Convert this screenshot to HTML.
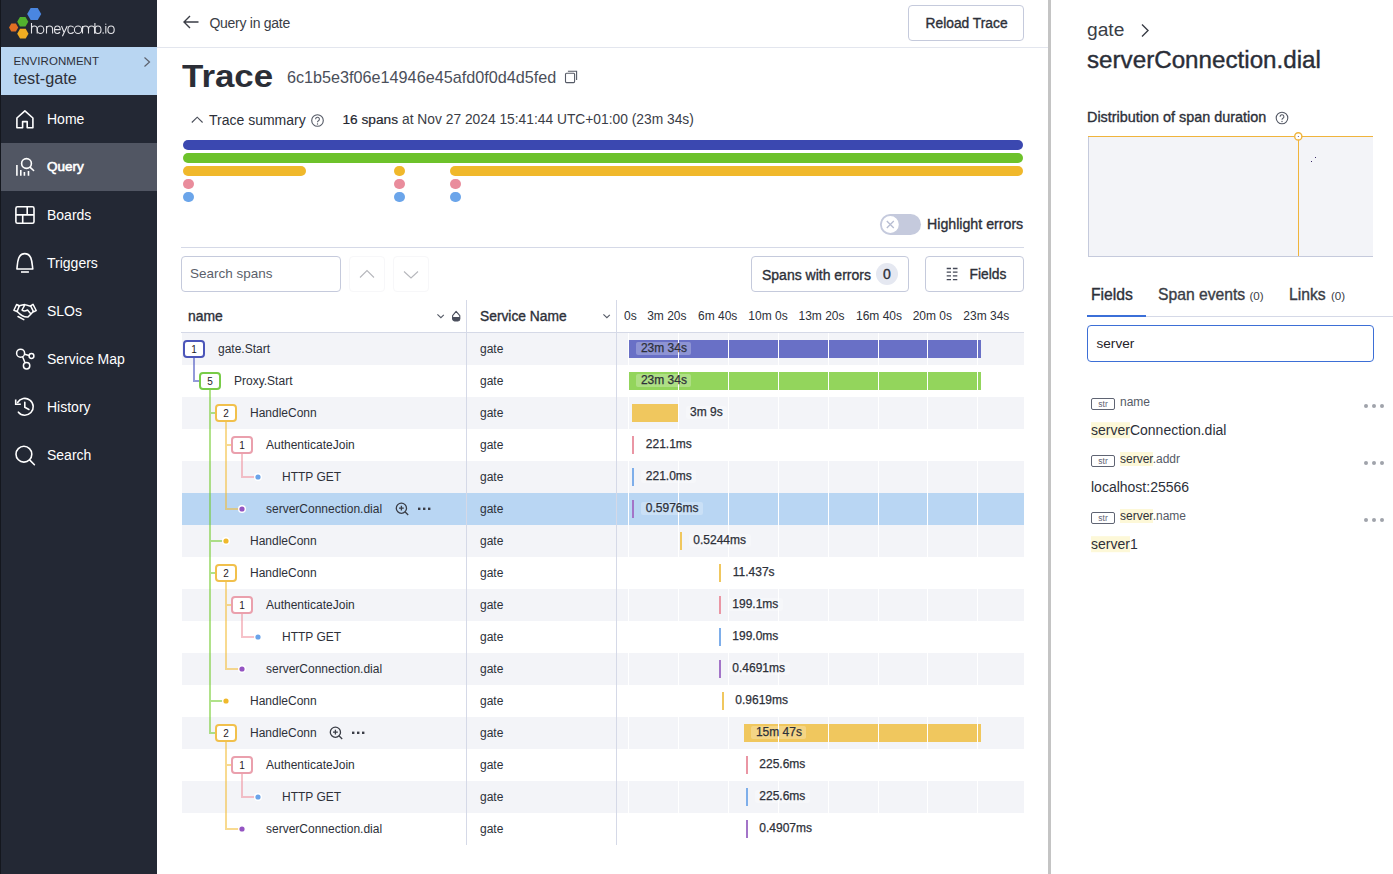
<!DOCTYPE html>
<html><head><meta charset="utf-8">
<style>
*{box-sizing:border-box;margin:0;padding:0}
html,body{width:1393px;height:874px;overflow:hidden;background:#fff;font-family:"Liberation Sans", sans-serif;color:#2d3039}
.ab{position:absolute}
.m{-webkit-text-stroke:0.35px currentColor}
.lb{position:absolute;white-space:nowrap;height:13px;line-height:13px;padding:0 4.5px;border-radius:2px;background:rgba(255,255,255,0.25);font-size:12px;color:#2d3039;-webkit-text-stroke:0.25px #2d3039}
.t{position:absolute;white-space:nowrap;line-height:1}
svg{position:absolute;overflow:visible}
</style></head><body>

<div class="ab" style="left:0;top:0;width:157px;height:874px;background:#232834"></div>
<div class="ab" style="left:0;top:0;width:1px;height:874px;background:#14171e"></div>
<svg style="left:0;top:0" width="157" height="47"><polygon points="41.25,14.00 37.73,20.11 30.68,20.11 27.15,14.00 30.68,7.89 37.73,7.89" fill="#4a86e0"/><polygon points="28.30,21.80 25.52,26.61 19.98,26.61 17.20,21.80 19.97,16.99 25.52,16.99" fill="#52b22e"/><polygon points="18.20,27.45 15.90,31.43 11.30,31.43 9.00,27.45 11.30,23.47 15.90,23.47" fill="#e06f23"/><polygon points="28.50,33.65 25.68,38.54 20.03,38.54 17.20,33.65 20.02,28.76 25.68,28.76" fill="#f0ad22"/></svg>
<svg style="left:0;top:0" width="157" height="47"><g fill="none" stroke="#e4e4e8" stroke-width="1.1"><path d="M31.5 23 V33.5 M31.5 29 Q31.5 26 34.35 26 Q37.2 26 37.2 29 V33.5"/><ellipse cx="40.5" cy="29.75" rx="3.3" ry="3.75"/><path d="M46.5 26 V33.5 M46.5 29 Q46.5 26 49.55 26 Q52.6 26 52.6 29 V33.5"/><path d="M54.5 29.6 H60.2 C60.2 27.4 58.9 26 57.35 26 C55.8 26 54.5 27.6 54.5 29.75 C54.5 31.9 55.8 33.5 57.35 33.5 C58.4 33.5 59.3 33 59.9 32.1"/><path d="M61.5 26 L64.3 33 M67.2 26 L62.4 36.3"/><path d="M73.6 27.4 C73 26.5 72 26 70.8 26 C69.2 26 67.9 27.6 67.9 29.75 C67.9 31.9 69.2 33.5 70.8 33.5 C72 33.5 73 33 73.6 32.1"/><ellipse cx="78.05" cy="29.75" rx="3.65" ry="3.75"/><path d="M82.5 26 V33.5 M82.5 29 Q82.5 26 85.5 26 Q88.5 26 88.5 29 V33.5 M88.5 29 Q88.5 26 91.5 26 Q94.6 26 94.6 29 V33.5"/><path d="M94.9 23 V33.5"/><ellipse cx="97.95" cy="29.75" rx="3.05" ry="3.75"/><path d="M105.8 26 V33.5"/><ellipse cx="111.05" cy="29.75" rx="3.15" ry="3.75"/></g><circle cx="103.1" cy="33" r="0.75" fill="#e4e4e8"/><circle cx="105.8" cy="24.2" r="0.6" fill="#e4e4e8"/></svg>
<div class="ab" style="left:1px;top:47px;width:156px;height:48px;background:#b9d6f2"></div>
<div class="t" style="left:13.5px;top:55.5px;font-size:11.5px;letter-spacing:0.05px;color:#2d3039">ENVIRONMENT</div>
<div class="t" style="left:13.5px;top:70px;font-size:16.3px;color:#2d3039">test-gate</div>
<svg style="left:142px;top:56px" width="10" height="12"><path d="M2.5 1.5 L7.5 6 L2.5 10.5" fill="none" stroke="#5d626e" stroke-width="1.2"/></svg>
<svg style="left:10px;top:105px" width="30" height="30"><path d="M6.9 22.8 V13 L14.9 5.8 L22.9 13 V22.8 H17.2 V16.6 H12.6 V22.8 Z" fill="none" stroke="#fff" stroke-width="1.6" stroke-linejoin="round"/></svg>
<div class="t" style="left:47px;top:112px;font-size:14px;color:#fff;">Home</div>
<div class="ab" style="left:1px;top:143px;width:156px;height:48px;background:#515663"></div>
<svg style="left:10px;top:153px" width="30" height="30"><g stroke="#fff" stroke-width="1.6" fill="none"><path d="M6.9 12 V22.8 M10.8 17 V22.8 M14.4 18.9 V22.8 M18.5 17.9 V22.8"/><circle cx="16.5" cy="10.5" r="4.9"/><path d="M20.2 14.3 L23.6 17.5" stroke-linecap="round"/></g></svg>
<div class="t" style="left:47px;top:160px;font-size:13.5px;color:#fff;-webkit-text-stroke:0.6px #fff">Query</div>
<svg style="left:10px;top:201px" width="30" height="30"><g stroke="#fff" stroke-width="1.6" fill="none"><rect x="5.9" y="5.8" width="18.1" height="16.5" rx="1.6"/><path d="M5.9 13.9 H24 M17.2 5.8 V13.9 M12.7 13.9 V22.3"/></g></svg>
<div class="t" style="left:47px;top:208px;font-size:14px;color:#fff;">Boards</div>
<svg style="left:10px;top:249px" width="30" height="30"><g stroke="#fff" stroke-width="1.6" fill="none" stroke-linejoin="round"><path d="M6.9 20 C7.6 15 7.2 4.6 14.8 4.6 C22.4 4.6 22 15 22.8 20 Z"/><path d="M11 23 H18.9"/></g></svg>
<div class="t" style="left:47px;top:256px;font-size:14px;color:#fff;">Triggers</div>
<svg style="left:10px;top:297px" width="30" height="30"><g stroke="#fff" stroke-width="1.5" fill="none" stroke-linejoin="round" stroke-linecap="round"><path d="M3.9 13.3 L6.6 7.5 L9.4 8.8 L7 14.6 Z"/><path d="M23 7.4 L26.2 13.5 L23.6 14.8 L20.6 8.9 Z"/><path d="M8.6 9 C11 8.3 13 7.8 15 7.6 L20.6 9.2 M15 7.6 L12 13 C13 14 15 14.5 17.5 13 L21 17 L18 20 C14 20.5 11 18.5 7.2 14.4 M23.2 14.6 L21 17"/><path d="M8 19.5 L13.8 22.6"/></g></svg>
<div class="t" style="left:47px;top:304px;font-size:14px;color:#fff;">SLOs</div>
<svg style="left:10px;top:345px" width="30" height="30"><g stroke="#fff" stroke-width="1.5" fill="none"><circle cx="10.6" cy="8.2" r="4"/><circle cx="21.5" cy="11" r="2.4"/><circle cx="16.6" cy="20.8" r="3.2"/><path d="M14.6 9.3 L19.1 10.4 M12.6 11.8 L15 17.7"/></g></svg>
<div class="t" style="left:47px;top:352px;font-size:14px;color:#fff;">Service Map</div>
<svg style="left:10px;top:393px" width="30" height="30"><g stroke="#fff" stroke-width="1.6" fill="none" stroke-linecap="round"><path d="M7.6 9.5 A8.4 8.4 0 1 1 8.4 19.2"/><path d="M5.7 7.2 V11.3 H10" stroke-linecap="square"/><path d="M14.8 9.3 V14.3 L18.9 16.5"/></g></svg>
<div class="t" style="left:47px;top:400px;font-size:14px;color:#fff;">History</div>
<svg style="left:10px;top:441px" width="30" height="30"><g stroke="#fff" stroke-width="1.6" fill="none"><circle cx="13.9" cy="13.2" r="7.9"/><path d="M19.6 18.9 L24.4 23.7" stroke-linecap="round"/></g></svg>
<div class="t" style="left:47px;top:448px;font-size:14px;color:#fff;">Search</div>
<svg style="left:182px;top:14px" width="18" height="16"><path d="M16.5 8 H2 M8 2 L2 8 L8 14" fill="none" stroke="#3a3d46" stroke-width="1.4"/></svg>
<div class="t" style="left:209.5px;top:16px;font-size:14px;letter-spacing:-0.28px;color:#3a3d46">Query in gate</div>
<div class="ab" style="left:908px;top:5px;width:116px;height:36px;border:1px solid #c5cadc;border-radius:4px"></div>
<div class="t m" style="left:925.5px;top:16.5px;font-size:13.8px;color:#2d3039">Reload Trace</div>
<div class="ab" style="left:157px;top:47px;width:891px;height:1px;background:#e3e6ee"></div>
<div class="t" style="left:182px;top:61px;font-size:31px;font-weight:700;color:#2b2e36;transform:scaleX(1.125);transform-origin:0 0">Trace</div>
<div class="t" style="left:287px;top:69px;font-size:16.2px;color:#4b4f5a">6c1b5e3f06e14946e45afd0f0d4d5fed</div>
<svg style="left:564px;top:70px" width="14" height="14"><rect x="1.5" y="3.3" width="9.1" height="9.3" rx="1" fill="none" stroke="#555a66" stroke-width="1.1"/><path d="M3.9 1.3 H12.6 V9.9" fill="none" stroke="#555a66" stroke-width="1.1"/></svg>
<svg style="left:190px;top:115px" width="14" height="10"><path d="M1.8 7.5 L7.2 2.2 L12.6 7.5" fill="none" stroke="#4b4f5a" stroke-width="1.15"/></svg>
<div class="t" style="left:209px;top:113px;font-size:14px;color:#2d3039">Trace summary</div>
<svg style="left:311px;top:114px" width="14" height="14"><circle cx="6.5" cy="6.5" r="5.8" fill="none" stroke="#555a66" stroke-width="1.1"/><path d="M4.6 5.2 A1.9 1.9 0 1 1 7.2 6.9 Q6.5 7.3 6.5 8.2" fill="none" stroke="#555a66" stroke-width="1.1"/><circle cx="6.5" cy="10" r="0.7" fill="#555a66"/></svg>
<div class="t" style="left:342.5px;top:113px;font-size:13.7px;color:#23262e;-webkit-text-stroke:0.2px #23262e">16 spans</div>
<div class="t" style="left:402px;top:113px;font-size:13.8px;color:#3a3d46">at Nov 27 2024 15:41:44 UTC+01:00 (23m 34s)</div>
<div class="ab" style="left:183px;top:140px;width:840px;height:10px;border-radius:5px;background:#3b48b0"></div>
<div class="ab" style="left:183px;top:153px;width:840px;height:10px;border-radius:5px;background:#6dc22a"></div>
<div class="ab" style="left:183px;top:166px;width:123px;height:10px;border-radius:5px;background:#f0b82b"></div>
<div class="ab" style="left:394px;top:166px;width:11px;height:10px;border-radius:5px;background:#f0b82b"></div>
<div class="ab" style="left:450px;top:166px;width:573px;height:10px;border-radius:5px;background:#f0b82b"></div>
<div class="ab" style="left:183px;top:179px;width:11px;height:10px;border-radius:5px;background:#e98c9c"></div>
<div class="ab" style="left:183px;top:192px;width:11px;height:10px;border-radius:5px;background:#6ba5ea"></div>
<div class="ab" style="left:394px;top:179px;width:11px;height:10px;border-radius:5px;background:#e98c9c"></div>
<div class="ab" style="left:394px;top:192px;width:11px;height:10px;border-radius:5px;background:#6ba5ea"></div>
<div class="ab" style="left:450px;top:179px;width:11px;height:10px;border-radius:5px;background:#e98c9c"></div>
<div class="ab" style="left:450px;top:192px;width:11px;height:10px;border-radius:5px;background:#6ba5ea"></div>
<div class="ab" style="left:880px;top:214px;width:41px;height:21px;border-radius:11px;background:#c5cadd"></div>
<svg style="left:880px;top:214px" width="21" height="21"><circle cx="10.3" cy="10.5" r="9.2" fill="#fff" stroke="#c5cadd" stroke-width="1.4"/><path d="M6.8 7 L13.8 14 M13.8 7 L6.8 14" stroke="#b7bdd2" stroke-width="1.3"/></svg>
<div class="t m" style="left:927px;top:217px;font-size:14.2px;color:#2d3039">Highlight errors</div>
<div class="ab" style="left:181px;top:247px;width:843px;height:1px;background:#d5d9e7"></div>
<div class="ab" style="left:181px;top:256px;width:160px;height:36px;border:1px solid #c5cadc;border-radius:4px"></div>
<div class="t" style="left:190px;top:267px;font-size:13.5px;color:#5b5f6b">Search spans</div>
<div class="ab" style="left:349px;top:256px;width:36px;height:36px;border:1px solid #f7f7f9;border-radius:4px"></div>
<div class="ab" style="left:393px;top:256px;width:36px;height:36px;border:1px solid #f7f7f9;border-radius:4px"></div>
<svg style="left:359px;top:268.5px" width="16" height="10"><path d="M1 8.5 L8 1.5 L15 8.5" fill="none" stroke="#b6b7bc" stroke-width="1.1"/></svg>
<svg style="left:403px;top:270px" width="16" height="10"><path d="M1 1.5 L8 8 L15 1.5" fill="none" stroke="#b6b7bc" stroke-width="1.1"/></svg>
<div class="ab" style="left:751px;top:256px;width:158px;height:36px;border:1px solid #c5cadc;border-radius:4px"></div>
<div class="t m" style="left:762px;top:267.5px;font-size:14px;color:#2d3039">Spans with errors</div>
<div class="ab" style="left:876px;top:263px;width:22px;height:22px;border-radius:11px;background:#e5e8f1"></div>
<div class="t m" style="left:883px;top:267px;font-size:14px;color:#2d3039">0</div>
<div class="ab" style="left:925px;top:256px;width:99px;height:36px;border:1px solid #c5cadc;border-radius:4px"></div>
<svg style="left:940px;top:262px" width="24" height="24"><g stroke="#454957" stroke-width="1.3"><path d="M6.7 6.5 H11 M12.9 6.5 H17.5 M6.7 10.2 H11 M12.9 10.2 H17.5 M6.7 13.9 H11 M12.9 13.9 H17.3 M6.7 17.6 H11 M12.9 17.6 H17.3"/></g></svg>
<div class="t m" style="left:969.5px;top:268.2px;font-size:13.8px;color:#2d3039">Fields</div>
<div class="ab" style="left:181px;top:332px;width:843px;height:1px;background:#d5d9e7"></div>
<div class="t m" style="left:188px;top:310px;font-size:13.9px;color:#2d3039">name</div>
<svg style="left:430px;top:302px" width="40" height="28"><path d="M7.4 12.3 L10.9 15.7 L13.8 12.8" fill="none" stroke="#555a66" stroke-width="1.1"/><path d="M26.1 9.3 L22.6 13.6 L22.6 17 Q23 19 24.5 19 H28 Q29.6 19 29.8 17 L29.8 13.6 Z" fill="none" stroke="#4a4e5c" stroke-width="1.1" stroke-linejoin="round"/><path d="M22.4 14.9 H30 V17 Q29.6 19 28 19 H24.5 Q23 19 22.4 17 Z" fill="#4a4e5c"/></svg>
<div class="t m" style="left:480px;top:310px;font-size:13.8px;color:#2d3039">Service Name</div>
<svg style="left:596px;top:302px" width="20" height="28"><path d="M7.4 12.3 L10.9 15.7 L13.8 12.8" fill="none" stroke="#555a66" stroke-width="1.1"/></svg>
<div class="t" style="left:624px;top:310px;font-size:12px;color:#2d3039">0s</div>
<div class="t" style="left:647.2px;top:310px;font-size:12px;color:#2d3039">3m 20s</div>
<div class="t" style="left:698px;top:310px;font-size:12px;color:#2d3039">6m 40s</div>
<div class="t" style="left:748.3px;top:310px;font-size:12px;color:#2d3039">10m 0s</div>
<div class="t" style="left:798.5px;top:310px;font-size:12px;color:#2d3039">13m 20s</div>
<div class="t" style="left:856px;top:310px;font-size:12px;color:#2d3039">16m 40s</div>
<div class="t" style="left:912.7px;top:310px;font-size:12px;color:#2d3039">20m 0s</div>
<div class="t" style="left:963.3px;top:310px;font-size:12px;color:#2d3039">23m 34s</div>
<div class="ab" style="left:182px;top:333px;width:842px;height:32px;background:#f3f4f8"></div>
<div class="ab" style="left:182px;top:397px;width:842px;height:32px;background:#f3f4f8"></div>
<div class="ab" style="left:182px;top:461px;width:842px;height:32px;background:#f3f4f8"></div>
<div class="ab" style="left:182px;top:493px;width:842px;height:32px;background:#b9d6f3"></div>
<div class="ab" style="left:182px;top:525px;width:842px;height:32px;background:#f3f4f8"></div>
<div class="ab" style="left:182px;top:589px;width:842px;height:32px;background:#f3f4f8"></div>
<div class="ab" style="left:182px;top:653px;width:842px;height:32px;background:#f3f4f8"></div>
<div class="ab" style="left:182px;top:717px;width:842px;height:32px;background:#f3f4f8"></div>
<div class="ab" style="left:182px;top:781px;width:842px;height:32px;background:#f3f4f8"></div>
<div class="ab" style="left:628.0px;top:333px;width:1px;height:512px;background:#fff"></div>
<div class="ab" style="left:677.8px;top:333px;width:1px;height:512px;background:#fff"></div>
<div class="ab" style="left:727.6px;top:333px;width:1px;height:512px;background:#fff"></div>
<div class="ab" style="left:777.5px;top:333px;width:1px;height:512px;background:#fff"></div>
<div class="ab" style="left:827.5px;top:333px;width:1px;height:512px;background:#fff"></div>
<div class="ab" style="left:877.5px;top:333px;width:1px;height:512px;background:#fff"></div>
<div class="ab" style="left:927.2px;top:333px;width:1px;height:512px;background:#fff"></div>
<div class="ab" style="left:977.1px;top:333px;width:1px;height:512px;background:#fff"></div>
<div class="ab" style="left:466px;top:300px;width:1px;height:545px;background:#d5d9e7"></div>
<div class="ab" style="left:616px;top:300px;width:1px;height:545px;background:#d5d9e7"></div>
<svg style="left:0;top:0" width="1393" height="874"><path d="M194 358 V381 M194 381 H199" stroke="#3b47bc" stroke-opacity="0.55" stroke-width="2" fill="none" stroke-linecap="square"/><path d="M210 390 V733 M210 413 H215 M210 541 H226 M210 573 H215 M210 701 H226 M210 733 H215" stroke="#70ca29" stroke-opacity="0.55" stroke-width="2" fill="none" stroke-linecap="square"/><path d="M226 422 V509 M226 445 H231 M226 509 H242" stroke="#f3bc34" stroke-opacity="0.55" stroke-width="2" fill="none" stroke-linecap="square"/><path d="M242 454 V477 M242 477 H258" stroke="#ee909d" stroke-opacity="0.55" stroke-width="2" fill="none" stroke-linecap="square"/><path d="M226 582 V669 M226 605 H231 M226 669 H242" stroke="#f3bc34" stroke-opacity="0.55" stroke-width="2" fill="none" stroke-linecap="square"/><path d="M242 614 V637 M242 637 H258" stroke="#ee909d" stroke-opacity="0.55" stroke-width="2" fill="none" stroke-linecap="square"/><path d="M226 742 V829 M226 765 H231 M226 829 H242" stroke="#f3bc34" stroke-opacity="0.55" stroke-width="2" fill="none" stroke-linecap="square"/><path d="M242 774 V797 M242 797 H258" stroke="#ee909d" stroke-opacity="0.55" stroke-width="2" fill="none" stroke-linecap="square"/><circle cx="258" cy="477" r="4" fill="#fff"/><circle cx="258" cy="477" r="2.6" fill="#6aa4ea"/><circle cx="242" cy="509" r="4" fill="#fff"/><circle cx="242" cy="509" r="2.6" fill="#9454c2"/><circle cx="226" cy="541" r="4" fill="#fff"/><circle cx="226" cy="541" r="2.6" fill="#f0b82b"/><circle cx="258" cy="637" r="4" fill="#fff"/><circle cx="258" cy="637" r="2.6" fill="#6aa4ea"/><circle cx="242" cy="669" r="4" fill="#fff"/><circle cx="242" cy="669" r="2.6" fill="#9454c2"/><circle cx="226" cy="701" r="4" fill="#fff"/><circle cx="226" cy="701" r="2.6" fill="#f0b82b"/><circle cx="258" cy="797" r="4" fill="#fff"/><circle cx="258" cy="797" r="2.6" fill="#6aa4ea"/><circle cx="242" cy="829" r="4" fill="#fff"/><circle cx="242" cy="829" r="2.6" fill="#9454c2"/></svg>
<div class="ab" style="left:183px;top:340px;width:22px;height:18px;border:2px solid #4b55b9;border-radius:4px;background:#fff"></div>
<div class="t" style="left:183px;top:344.8px;width:22px;text-align:center;font-size:10px;color:#1f2228">1</div>
<div class="t" style="left:218px;top:343px;font-size:12px;color:#2d3039">gate.Start</div>
<div class="t" style="left:480px;top:343px;font-size:12px;color:#2d3039">gate</div>
<div class="ab" style="left:199px;top:372px;width:22px;height:18px;border:2px solid #78cc48;border-radius:4px;background:#fff"></div>
<div class="t" style="left:199px;top:376.8px;width:22px;text-align:center;font-size:10px;color:#1f2228">5</div>
<div class="t" style="left:234px;top:375px;font-size:12px;color:#2d3039">Proxy.Start</div>
<div class="t" style="left:480px;top:375px;font-size:12px;color:#2d3039">gate</div>
<div class="ab" style="left:215px;top:404px;width:22px;height:18px;border:2px solid #f1c04c;border-radius:4px;background:#fff"></div>
<div class="t" style="left:215px;top:408.8px;width:22px;text-align:center;font-size:10px;color:#1f2228">2</div>
<div class="t" style="left:250px;top:407px;font-size:12px;color:#2d3039">HandleConn</div>
<div class="t" style="left:480px;top:407px;font-size:12px;color:#2d3039">gate</div>
<div class="ab" style="left:231px;top:436px;width:22px;height:18px;border:2px solid #eaa0ad;border-radius:4px;background:#fff"></div>
<div class="t" style="left:231px;top:440.8px;width:22px;text-align:center;font-size:10px;color:#1f2228">1</div>
<div class="t" style="left:266px;top:439px;font-size:12px;color:#2d3039">AuthenticateJoin</div>
<div class="t" style="left:480px;top:439px;font-size:12px;color:#2d3039">gate</div>
<div class="t" style="left:282px;top:471px;font-size:12px;color:#2d3039">HTTP GET</div>
<div class="t" style="left:480px;top:471px;font-size:12px;color:#2d3039">gate</div>
<div class="t" style="left:266px;top:503px;font-size:12px;color:#2d3039">serverConnection.dial</div>
<div class="t" style="left:480px;top:503px;font-size:12px;color:#2d3039">gate</div>
<div class="t" style="left:250px;top:535px;font-size:12px;color:#2d3039">HandleConn</div>
<div class="t" style="left:480px;top:535px;font-size:12px;color:#2d3039">gate</div>
<div class="ab" style="left:215px;top:564px;width:22px;height:18px;border:2px solid #f1c04c;border-radius:4px;background:#fff"></div>
<div class="t" style="left:215px;top:568.8px;width:22px;text-align:center;font-size:10px;color:#1f2228">2</div>
<div class="t" style="left:250px;top:567px;font-size:12px;color:#2d3039">HandleConn</div>
<div class="t" style="left:480px;top:567px;font-size:12px;color:#2d3039">gate</div>
<div class="ab" style="left:231px;top:596px;width:22px;height:18px;border:2px solid #eaa0ad;border-radius:4px;background:#fff"></div>
<div class="t" style="left:231px;top:600.8px;width:22px;text-align:center;font-size:10px;color:#1f2228">1</div>
<div class="t" style="left:266px;top:599px;font-size:12px;color:#2d3039">AuthenticateJoin</div>
<div class="t" style="left:480px;top:599px;font-size:12px;color:#2d3039">gate</div>
<div class="t" style="left:282px;top:631px;font-size:12px;color:#2d3039">HTTP GET</div>
<div class="t" style="left:480px;top:631px;font-size:12px;color:#2d3039">gate</div>
<div class="t" style="left:266px;top:663px;font-size:12px;color:#2d3039">serverConnection.dial</div>
<div class="t" style="left:480px;top:663px;font-size:12px;color:#2d3039">gate</div>
<div class="t" style="left:250px;top:695px;font-size:12px;color:#2d3039">HandleConn</div>
<div class="t" style="left:480px;top:695px;font-size:12px;color:#2d3039">gate</div>
<div class="ab" style="left:215px;top:724px;width:22px;height:18px;border:2px solid #f1c04c;border-radius:4px;background:#fff"></div>
<div class="t" style="left:215px;top:728.8px;width:22px;text-align:center;font-size:10px;color:#1f2228">2</div>
<div class="t" style="left:250px;top:727px;font-size:12px;color:#2d3039">HandleConn</div>
<div class="t" style="left:480px;top:727px;font-size:12px;color:#2d3039">gate</div>
<div class="ab" style="left:231px;top:756px;width:22px;height:18px;border:2px solid #eaa0ad;border-radius:4px;background:#fff"></div>
<div class="t" style="left:231px;top:760.8px;width:22px;text-align:center;font-size:10px;color:#1f2228">1</div>
<div class="t" style="left:266px;top:759px;font-size:12px;color:#2d3039">AuthenticateJoin</div>
<div class="t" style="left:480px;top:759px;font-size:12px;color:#2d3039">gate</div>
<div class="t" style="left:282px;top:791px;font-size:12px;color:#2d3039">HTTP GET</div>
<div class="t" style="left:480px;top:791px;font-size:12px;color:#2d3039">gate</div>
<div class="t" style="left:266px;top:823px;font-size:12px;color:#2d3039">serverConnection.dial</div>
<div class="t" style="left:480px;top:823px;font-size:12px;color:#2d3039">gate</div>
<svg style="left:396px;top:499px" width="40" height="20"><g stroke="#3a3d46" stroke-width="1.3" fill="none"><circle cx="5.4" cy="9.2" r="5.1"/><path d="M3 9.2 H7.8 M5.4 6.8 V11.6 M9.2 13 L12.2 16"/></g><g fill="#3a3d46"><rect x="22" y="8.6" width="2.4" height="2.4"/><rect x="27" y="8.6" width="2.4" height="2.4"/><rect x="32" y="8.6" width="2.4" height="2.4"/></g></svg>
<svg style="left:330px;top:723px" width="40" height="20"><g stroke="#3a3d46" stroke-width="1.3" fill="none"><circle cx="5.4" cy="9.2" r="5.1"/><path d="M3 9.2 H7.8 M5.4 6.8 V11.6 M9.2 13 L12.2 16"/></g><g fill="#3a3d46"><rect x="22" y="8.6" width="2.4" height="2.4"/><rect x="27" y="8.6" width="2.4" height="2.4"/><rect x="32" y="8.6" width="2.4" height="2.4"/></g></svg>
<div class="ab" style="left:629px;top:340px;width:352.0px;height:18px;background:#6970c6"></div>
<div class="ab" style="left:629px;top:372px;width:352.0px;height:18px;background:#93d55c"></div>
<div class="ab" style="left:631.7px;top:404px;width:46.6px;height:18px;background:#f0c75e"></div>
<div class="ab" style="left:632px;top:436px;width:2.0px;height:18px;background:#ea96a4"></div>
<div class="ab" style="left:632px;top:468px;width:2.0px;height:18px;background:#7eaeea"></div>
<div class="ab" style="left:632px;top:500px;width:2.0px;height:18px;background:#a374c8"></div>
<div class="ab" style="left:679.5px;top:532px;width:2.0px;height:18px;background:#f0c75e"></div>
<div class="ab" style="left:719px;top:564px;width:2.0px;height:18px;background:#f0c75e"></div>
<div class="ab" style="left:718.5px;top:596px;width:2.0px;height:18px;background:#ea96a4"></div>
<div class="ab" style="left:718.5px;top:628px;width:2.0px;height:18px;background:#7eaeea"></div>
<div class="ab" style="left:718.5px;top:660px;width:2.0px;height:18px;background:#a374c8"></div>
<div class="ab" style="left:721.5px;top:692px;width:2.0px;height:18px;background:#f0c75e"></div>
<div class="ab" style="left:744px;top:724px;width:237.0px;height:18px;background:#f0c75e"></div>
<div class="ab" style="left:745.5px;top:756px;width:2.0px;height:18px;background:#ea96a4"></div>
<div class="ab" style="left:745.5px;top:788px;width:2.0px;height:18px;background:#7eaeea"></div>
<div class="ab" style="left:745.5px;top:820px;width:2.0px;height:18px;background:#a374c8"></div>
<div class="ab" style="left:677.8px;top:340px;width:1px;height:18px;background:#fff"></div>
<div class="ab" style="left:727.6px;top:340px;width:1px;height:18px;background:#fff"></div>
<div class="ab" style="left:777.5px;top:340px;width:1px;height:18px;background:#fff"></div>
<div class="ab" style="left:827.5px;top:340px;width:1px;height:18px;background:#fff"></div>
<div class="ab" style="left:877.5px;top:340px;width:1px;height:18px;background:#fff"></div>
<div class="ab" style="left:927.2px;top:340px;width:1px;height:18px;background:#fff"></div>
<div class="ab" style="left:977.1px;top:340px;width:1px;height:18px;background:#fff"></div>
<div class="ab" style="left:677.8px;top:372px;width:1px;height:18px;background:#fff"></div>
<div class="ab" style="left:727.6px;top:372px;width:1px;height:18px;background:#fff"></div>
<div class="ab" style="left:777.5px;top:372px;width:1px;height:18px;background:#fff"></div>
<div class="ab" style="left:827.5px;top:372px;width:1px;height:18px;background:#fff"></div>
<div class="ab" style="left:877.5px;top:372px;width:1px;height:18px;background:#fff"></div>
<div class="ab" style="left:927.2px;top:372px;width:1px;height:18px;background:#fff"></div>
<div class="ab" style="left:977.1px;top:372px;width:1px;height:18px;background:#fff"></div>
<div class="ab" style="left:777.5px;top:724px;width:1px;height:18px;background:#fff"></div>
<div class="ab" style="left:827.5px;top:724px;width:1px;height:18px;background:#fff"></div>
<div class="ab" style="left:877.5px;top:724px;width:1px;height:18px;background:#fff"></div>
<div class="ab" style="left:927.2px;top:724px;width:1px;height:18px;background:#fff"></div>
<div class="ab" style="left:977.1px;top:724px;width:1px;height:18px;background:#fff"></div>
<div class="lb" style="left:636.4px;top:342px">23m 34s</div>
<div class="lb" style="left:636.4px;top:374px">23m 34s</div>
<div class="lb" style="left:685.6px;top:406px">3m 9s</div>
<div class="lb" style="left:641.3px;top:438px">221.1ms</div>
<div class="lb" style="left:641.3px;top:470px">221.0ms</div>
<div class="lb" style="left:641.3px;top:502px">0.5976ms</div>
<div class="lb" style="left:688.8px;top:534px">0.5244ms</div>
<div class="lb" style="left:728.3px;top:566px">11.437s</div>
<div class="lb" style="left:727.8px;top:598px">199.1ms</div>
<div class="lb" style="left:727.8px;top:630px">199.0ms</div>
<div class="lb" style="left:727.8px;top:662px">0.4691ms</div>
<div class="lb" style="left:730.8px;top:694px">0.9619ms</div>
<div class="lb" style="left:751.4px;top:726px">15m 47s</div>
<div class="lb" style="left:754.8px;top:758px">225.6ms</div>
<div class="lb" style="left:754.8px;top:790px">225.6ms</div>
<div class="lb" style="left:754.8px;top:822px">0.4907ms</div>
<div class="ab" style="left:1048px;top:0;width:3px;height:874px;background:#c4c4c4"></div>
<div class="t" style="left:1087px;top:20px;font-size:19.2px;color:#3a3d46">gate</div>
<svg style="left:1140px;top:23px" width="10" height="15"><path d="M2 1.5 L8 7.5 L2 13.5" fill="none" stroke="#3a3d46" stroke-width="1.4"/></svg>
<div class="t m" style="left:1087px;top:48px;font-size:24.2px;-webkit-text-stroke:0.4px #2a2e38;color:#2a2e38">serverConnection.dial</div>
<div class="t m" style="left:1087px;top:110px;font-size:14.4px;color:#2d3039">Distribution of span duration</div>
<svg style="left:1275px;top:111px" width="14" height="14"><circle cx="7" cy="7" r="5.8" fill="none" stroke="#555a66" stroke-width="1.1"/><path d="M5.1 5.7 A1.9 1.9 0 1 1 7.7 7.4 Q7 7.8 7 8.7" fill="none" stroke="#555a66" stroke-width="1.1"/><circle cx="7" cy="10.5" r="0.7" fill="#555a66"/></svg>
<div class="ab" style="left:1088px;top:136px;width:285px;height:121px;background:#f3f4f8;border-left:1px solid #c5cadc;border-bottom:1px solid #c5cadc"></div>
<div class="ab" style="left:1088px;top:135.5px;width:285px;height:1.5px;background:#f0b43c"></div>
<div class="ab" style="left:1297.5px;top:136px;width:1.5px;height:120px;background:#f0b43c"></div>
<svg style="left:1290px;top:128px" width="16" height="16"><circle cx="8.3" cy="8.4" r="3.6" fill="#fff" stroke="#f0b43c" stroke-width="1.4"/><circle cx="8.3" cy="8.4" r="0.5" fill="#3a2a6a"/></svg>
<div class="ab" style="left:1311px;top:161px;width:1px;height:1px;background:#3a2a6a"></div>
<div class="ab" style="left:1315px;top:157px;width:1px;height:1px;background:#3a2a6a"></div>
<div class="t m" style="left:1091px;top:287px;font-size:15.7px;color:#2d3039">Fields</div>
<div class="t m" style="left:1158px;top:287px;font-size:15.7px;color:#3a3d46">Span events</div>
<div class="t" style="left:1249.5px;top:290px;font-size:11.6px;color:#3a3d46">(0)</div>
<div class="t m" style="left:1289px;top:287px;font-size:15.7px;color:#3a3d46">Links</div>
<div class="t" style="left:1331px;top:290px;font-size:11.6px;color:#3a3d46">(0)</div>
<div class="ab" style="left:1087px;top:316px;width:306px;height:1px;background:#d5d9e7"></div>
<div class="ab" style="left:1087px;top:315px;width:59px;height:2px;background:#3b6fd8"></div>
<div class="ab" style="left:1087px;top:325px;width:287px;height:37px;border:1.5px solid #3d6fd6;border-radius:4px"></div>
<div class="t" style="left:1096.5px;top:336.5px;font-size:13.6px;color:#1f2228">server</div>
<div class="ab" style="left:1091px;top:398px;width:24px;height:11.5px;border:1.5px solid #5f6473;border-radius:2px"></div>
<div class="t" style="left:1091px;top:399.5px;width:24px;text-align:center;font-size:8.5px;color:#5f6473">str</div>
<div class="t" style="left:1120px;top:395px;font-size:12px;line-height:15px;color:#555a66"><span style="background:none">name</span></div>
<div class="ab" style="left:1364px;top:404px;width:4px;height:4px;border-radius:2px;background:#a0a3ab"></div>
<div class="ab" style="left:1372px;top:404px;width:4px;height:4px;border-radius:2px;background:#a0a3ab"></div>
<div class="ab" style="left:1380px;top:404px;width:4px;height:4px;border-radius:2px;background:#a0a3ab"></div>
<div class="t" style="left:1091px;top:421px;font-size:14px;line-height:16px;color:#2d3039;transform:translateY(1.2px)"><span style="background:#fdf8d8">server</span>Connection.dial</div>
<div class="ab" style="left:1091px;top:455px;width:24px;height:11.5px;border:1.5px solid #5f6473;border-radius:2px"></div>
<div class="t" style="left:1091px;top:456.5px;width:24px;text-align:center;font-size:8.5px;color:#5f6473">str</div>
<div class="t" style="left:1120px;top:452px;font-size:12px;line-height:15px;color:#555a66"><span style="background:#fdf8d8;color:#2d3039">server</span>.addr</div>
<div class="ab" style="left:1364px;top:461px;width:4px;height:4px;border-radius:2px;background:#a0a3ab"></div>
<div class="ab" style="left:1372px;top:461px;width:4px;height:4px;border-radius:2px;background:#a0a3ab"></div>
<div class="ab" style="left:1380px;top:461px;width:4px;height:4px;border-radius:2px;background:#a0a3ab"></div>
<div class="t" style="left:1091px;top:478px;font-size:14px;line-height:16px;color:#2d3039;transform:translateY(1.2px)">localhost:25566</div>
<div class="ab" style="left:1091px;top:512px;width:24px;height:11.5px;border:1.5px solid #5f6473;border-radius:2px"></div>
<div class="t" style="left:1091px;top:513.5px;width:24px;text-align:center;font-size:8.5px;color:#5f6473">str</div>
<div class="t" style="left:1120px;top:509px;font-size:12px;line-height:15px;color:#555a66"><span style="background:#fdf8d8;color:#2d3039">server</span>.name</div>
<div class="ab" style="left:1364px;top:518px;width:4px;height:4px;border-radius:2px;background:#a0a3ab"></div>
<div class="ab" style="left:1372px;top:518px;width:4px;height:4px;border-radius:2px;background:#a0a3ab"></div>
<div class="ab" style="left:1380px;top:518px;width:4px;height:4px;border-radius:2px;background:#a0a3ab"></div>
<div class="t" style="left:1091px;top:535px;font-size:14px;line-height:16px;color:#2d3039;transform:translateY(1.2px)"><span style="background:#fdf8d8">server</span>1</div>
</body></html>
